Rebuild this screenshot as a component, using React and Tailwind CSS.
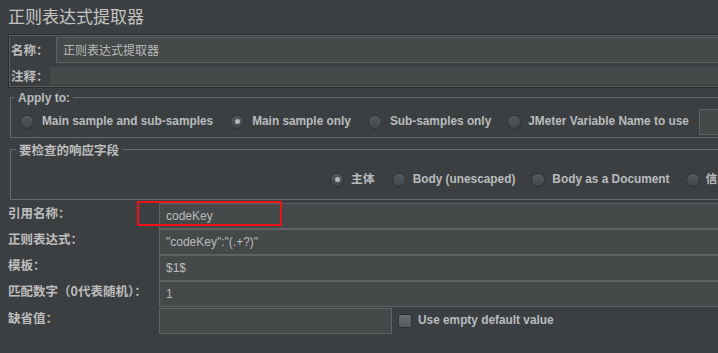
import React from "react";

const cjk = "font-['Noto_Sans_CJK_SC','Liberation_Sans',sans-serif]";
const latin = "font-['Liberation_Sans','Noto_Sans_CJK_SC',sans-serif]";

const Radio = ({ checked }) => (
	<span className="flex h-[14px] w-[14px] shrink-0 items-center justify-center rounded-full border border-[#2e3031] bg-gradient-to-b from-[#53575a] to-[#45484a] shadow-[inset_0_1px_0_#5e6264]">
		{checked && <span className="block h-[5px] w-[5px] rounded-full bg-[#b4b8ba]" />}
	</span>
);

const RadioItem = ({ label, checked, gap = "ml-[8px]", cn = "" }) => (
	<div className={`flex shrink-0 items-center ${cn}`}>
		<Radio checked={checked} />
		<span className={`${gap} whitespace-nowrap text-[11.85px] font-bold text-[#b9bcbe]`}>{label}</span>
	</div>
);

const Field = ({ value, w = "flex-1", mono = false }) => (
	<div className={`flex h-[26px] items-center border border-[#5f6263] bg-[#45494a] pl-[6px] ${w}`}>
		<span className={`${mono ? cjk : latin} whitespace-nowrap text-[12px] text-[#bbbbbb]`}>{value}</span>
	</div>
);

const Row = ({ label, value, children, top = "" }) => (
	<div className={`flex ${top}`}>
		<div className={`${cjk} w-[151px] shrink-0 pt-[2px] text-[12.5px] font-bold leading-[16px] text-[#bdbdbd]`}>{label}</div>
		{children || <Field value={value} />}
	</div>
);

const App = () => {
	const applyTo = [
		{ label: "Main sample and sub-samples", checked: false, cn: "" },
		{ label: "Main sample only", checked: true, cn: "ml-[17px]" },
		{ label: "Sub-samples only", checked: false, cn: "ml-[17px]" },
		{ label: "JMeter Variable Name to use", checked: false, cn: "ml-[16px]", gap: "ml-[7px]" },
	];
	const fields = [
		{ label: "主体", checked: true, cn: "", gap: "ml-[7px]" },
		{ label: "Body (unescaped)", checked: false, cn: "ml-[17px]", gap: "ml-[7px]" },
		{ label: "Body as a Document", checked: false, cn: "ml-[16px]", gap: "ml-[7px]" },
		{ label: "信", checked: false, cn: "ml-[16px]", gap: "ml-[6px]" },
	];

	return (
		<div className={`${latin} h-[353px] w-[718px] overflow-hidden bg-[#3c3f41] pl-[8px]`}>
			{/* title */}
			<div className={`${cjk} h-[34px] pt-[5px] text-[17px] leading-[22px] text-[#c4c4c4]`}>正则表达式提取器</div>

			{/* name / comment */}
			<div className="w-[760px] border-y border-l border-[#2a2c2d]">
				<div className="border-y border-l border-[#595c5d] pb-0 pt-[1px]">
					<div className="flex items-center">
						<div className={`${cjk} w-[46px] pl-[1px] text-[12.5px] font-bold text-[#bdbdbd]`}>名称：</div>
						<Field value="正则表达式提取器" mono />
					</div>
					<div className="mt-[4px] flex items-center">
						<div className={`${cjk} w-[40px] pl-[1px] text-[12.5px] font-bold text-[#bdbdbd]`}>注释：</div>
						<div className="h-[18px] flex-1 bg-[#45494a]" />
					</div>
				</div>
			</div>

			{/* apply to */}
			<fieldset className="ml-[2px] mt-[2px] w-[760px] border border-[#66696a] px-[9px] pb-[2px] pt-[3px]">
				<legend className="ml-[-5px] px-[3px] text-[12px] font-bold leading-[16px] text-[#b9bcbe]">Apply to:</legend>
				<div className="flex h-[26px] items-center">
					{applyTo.map((r) => (
						<RadioItem key={r.label} {...r} />
					))}
					<div className="ml-[10px] h-[26px] w-[60px] border border-[#5f6263] bg-[#45494a]" />
				</div>
			</fieldset>

			{/* response field */}
			<fieldset className="ml-[2px] mt-[4px] w-[760px] border border-[#66696a] pb-[8px] pl-[9px] pt-[11px]">
				<legend className={`${cjk} ml-[-4px] px-[3px] text-[12.5px] font-bold leading-[16px] text-[#bdbdbd]`}>要检查的响应字段</legend>
				<div className="flex h-[22px] items-center pl-[310px]">
					{fields.map((r) => (
						<RadioItem key={r.label} {...r} />
					))}
				</div>
			</fieldset>

			{/* rows */}
			<div className="relative mt-[3px] w-[760px]">
				<Row label="引用名称：" value="codeKey" />
				<Row label="正则表达式：" value={'"codeKey":"(.+?)"'} />
				<Row label="模板：" value="$1$" />
				<Row label="匹配数字（0代表随机）：" value="1" />
				<Row label="缺省值：" top="mt-[1px]">
					<Field value="" w="w-[233px]" />
					<div className="ml-[6px] flex items-center">
						<span className="h-[14px] w-[14px] rounded-[2px] border border-[#2e3031] bg-gradient-to-b from-[#6a6d6f] to-[#56595b]" />
						<span className="ml-[6px] text-[11.85px] font-bold text-[#b9bcbe]">Use empty default value</span>
					</div>
				</Row>
				{/* annotation box */}
				<div className="absolute left-[129px] top-[-2px] h-[25px] w-[145px] border-2 border-[#e8141a]" />
			</div>
		</div>
	);
};

export default App;
